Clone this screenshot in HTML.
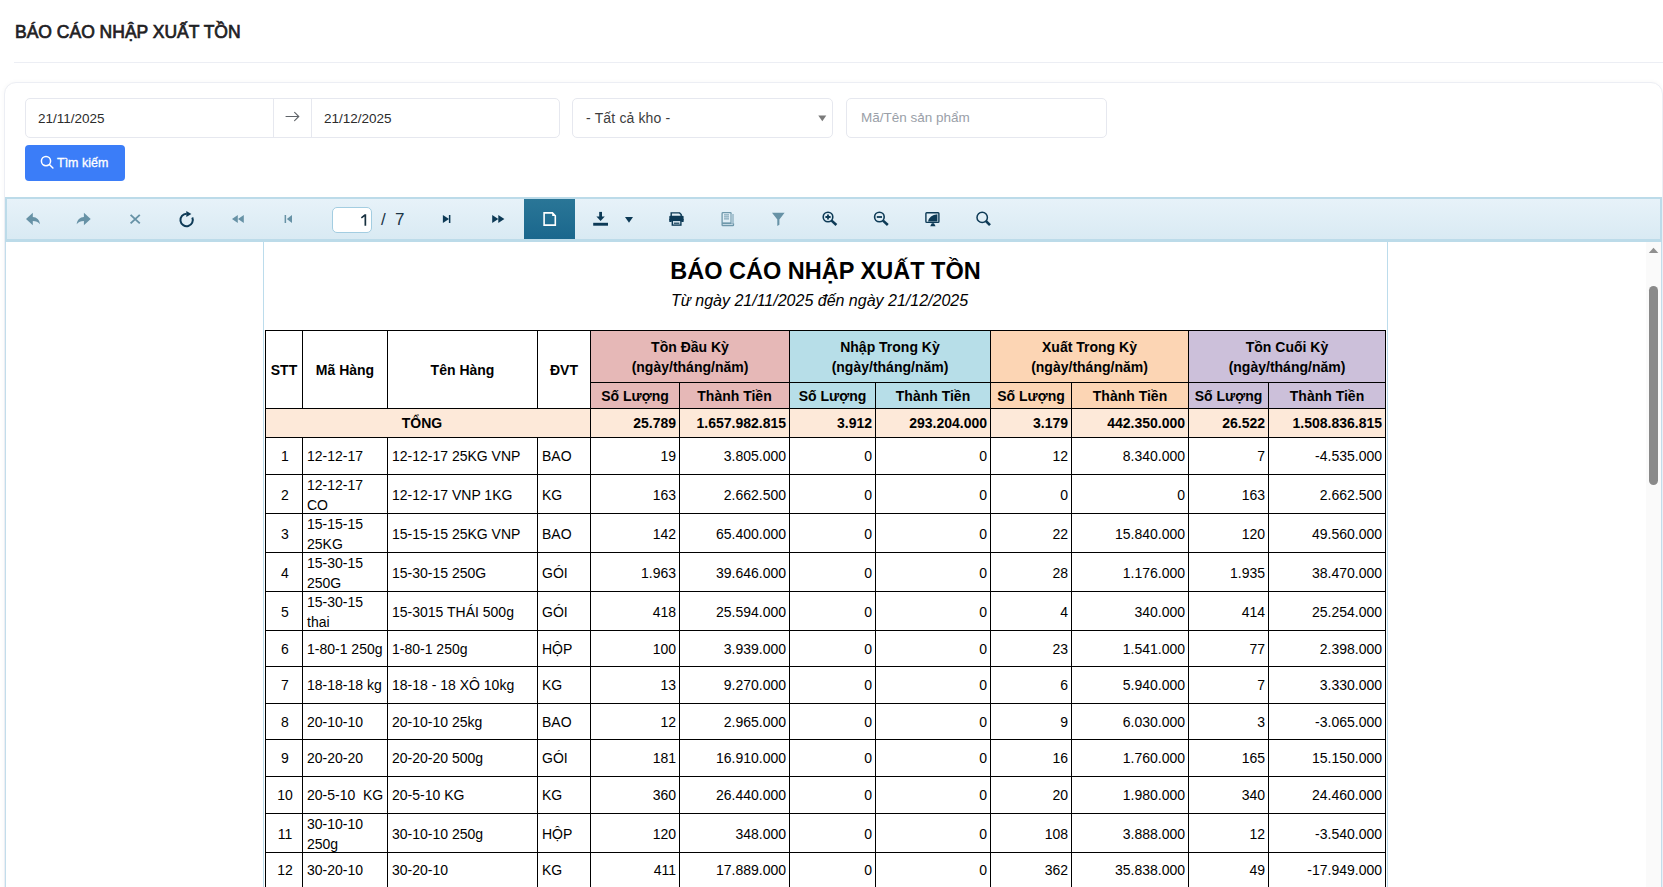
<!DOCTYPE html>
<html><head><meta charset="utf-8">
<style>
*{box-sizing:border-box;margin:0;padding:0}
html,body{width:1663px;height:887px;overflow:hidden;background:#fff;font-family:"Liberation Sans",sans-serif;color:#212529}
.abs{position:absolute}
#bgl{display:none}
#title{left:15px;top:22px;font-size:17.5px;font-weight:normal;-webkit-text-stroke:0.7px #1f2124;color:#1f2124;white-space:nowrap}
#hr{left:14px;top:62px;width:1649px;height:1px;background:#eceef4}
#card{left:4px;top:82px;width:1659px;height:900px;border:1px solid #eceef4;border-radius:11px;background:#fff;border-radius:12px;box-shadow:0 0 5px rgba(20,30,60,0.035)}
.inp{border:1px solid #e6e8ef;border-radius:5px;background:#fff;font-size:13.5px;color:#2b2b2b;white-space:nowrap}
#range{left:25px;top:98px;width:535px;height:40px}
#range .d1{left:12px;top:12px}
#range .sep1{left:247px;top:0;width:1px;height:38px;background:#e6e8ef}
#range .sep2{left:285px;top:0;width:1px;height:38px;background:#e6e8ef}
#range .d2{left:298px;top:12px}
#sel{left:572px;top:98px;width:261px;height:40px}
#sel .t{left:13px;top:11px;color:#3d3d3d;font-size:14px;word-spacing:0.5px}
#prod{left:846px;top:98px;width:261px;height:40px}
#prod .t{left:14px;top:11px;color:#9aa0a8}
#btn{left:25px;top:145px;width:100px;height:36px;background:#3b7df8;border-radius:4px;color:#fff;font-size:12.5px}
#btn .t{left:32px;top:10.5px;color:#fff;-webkit-text-stroke:0.3px #fff}
#tb{left:5px;top:197px;width:1657px;height:45px;border:2px solid #bcdbe9;border-bottom-width:3px;background:linear-gradient(#e7f2f9,#d9eaf3)}
#viewer{left:5px;top:242px;width:1657px;height:660px;border-left:1px solid #c2ddeb;border-right:1px solid #c2ddeb;background:#fff}
#page{left:263px;top:242px;width:1125px;height:700px;border-left:1px solid #bcdcec;border-right:1px solid #bcdcec;background:#fff}
#sb{left:1646px;top:242px;width:15px;height:645px;background:#fafafa}
#thumb{left:1649px;top:286px;width:9px;height:199px;background:#8a8a8a;border-radius:5px}
#pgin{left:332px;top:207px;width:40px;height:26px;background:#fff;border:1px solid #a3cde1;border-radius:5px}
#pgin .t{right:3px;top:4px;font-size:16px;color:#17303f}
#pgof{left:381px;top:210px;font-size:17px;color:#1b3445;white-space:nowrap;word-spacing:4.5px}
#act{left:524px;top:199px;width:51px;height:40px;background:linear-gradient(#2a7697,#1a678d)}
#icons{left:0;top:0;width:1663px;height:887px;pointer-events:none}

.c{position:absolute;border:1px solid #000;display:flex;align-items:center;font-size:14px;color:#000;line-height:20px;white-space:nowrap;overflow:hidden}
.c.c{justify-content:center;text-align:center}
.c.l{justify-content:flex-start;padding-left:4px;text-align:left}
.c.r{justify-content:flex-end;padding-right:3px}
.c.b{font-weight:bold}
.c.tong span{margin-left:-12px}
.c.stt span{margin-left:2px}
.c.pt{padding-top:2px}
.c.ml span{position:relative;top:0px}
#rtitle{left:263px;width:1125px;top:258px;text-align:center;font-size:23.5px;font-weight:bold;color:#000;white-space:nowrap}
#rsub{left:257px;width:1125px;top:292px;text-align:center;font-size:16px;font-style:italic;color:#000;white-space:nowrap}
</style></head><body>
<div id="bgl" class="abs"></div>
<div id="title" class="abs">BÁO CÁO NHẬP XUẤT TỒN</div>
<div id="hr" class="abs"></div>
<div id="card" class="abs"></div>
<div id="range" class="abs inp">
  <div class="abs d1">21/11/2025</div>
  <div class="abs sep1"></div>
  <div class="abs sep2"></div>
  <div class="abs d2">21/12/2025</div>
</div>
<div id="sel" class="abs inp"><div class="abs t">- Tất cả kho -</div></div>
<div id="prod" class="abs inp"><div class="abs t">Mã/Tên sản phẩm</div></div>
<div id="btn" class="abs"><div class="abs t">Tìm kiếm</div></div>
<div id="tb" class="abs"></div>
<div id="act" class="abs"></div>
<div id="pgin" class="abs"></div>
<div id="pgof" class="abs">/ 7</div>
<div id="viewer" class="abs"></div>
<div id="page" class="abs"></div>
<div id="rtitle" class="abs">BÁO CÁO NHẬP XUẤT TỒN</div>
<div id="rsub" class="abs">Từ ngày 21/11/2025 đến ngày 21/12/2025</div>
<div class="c c b" style="left:265px;top:330px;width:38px;height:79px;"><span>STT</span></div>
<div class="c c b" style="left:302px;top:330px;width:86px;height:79px;"><span>Mã Hàng</span></div>
<div class="c c b" style="left:387px;top:330px;width:151px;height:79px;"><span>Tên Hàng</span></div>
<div class="c c b" style="left:537px;top:330px;width:54px;height:79px;"><span>ĐVT</span></div>
<div class="c c b g" style="left:590px;top:330px;width:200px;height:53px;background:#e6b8b7;"><span>Tồn Đầu Kỳ<br>(ngày/tháng/năm)</span></div>
<div class="c c b" style="left:590px;top:382px;width:90px;height:27px;background:#e6b8b7;"><span>Số Lượng</span></div>
<div class="c c b" style="left:679px;top:382px;width:111px;height:27px;background:#e6b8b7;"><span>Thành Tiền</span></div>
<div class="c c b g" style="left:789px;top:330px;width:202px;height:53px;background:#b7dee8;"><span>Nhập Trong Kỳ<br>(ngày/tháng/năm)</span></div>
<div class="c c b" style="left:789px;top:382px;width:87px;height:27px;background:#b7dee8;"><span>Số Lượng</span></div>
<div class="c c b" style="left:875px;top:382px;width:116px;height:27px;background:#b7dee8;"><span>Thành Tiền</span></div>
<div class="c c b g" style="left:990px;top:330px;width:199px;height:53px;background:#fcd5b4;"><span>Xuất Trong Kỳ<br>(ngày/tháng/năm)</span></div>
<div class="c c b" style="left:990px;top:382px;width:82px;height:27px;background:#fcd5b4;"><span>Số Lượng</span></div>
<div class="c c b" style="left:1071px;top:382px;width:118px;height:27px;background:#fcd5b4;"><span>Thành Tiền</span></div>
<div class="c c b g" style="left:1188px;top:330px;width:198px;height:53px;background:#ccc0da;"><span>Tồn Cuối Kỳ<br>(ngày/tháng/năm)</span></div>
<div class="c c b" style="left:1188px;top:382px;width:81px;height:27px;background:#ccc0da;"><span>Số Lượng</span></div>
<div class="c c b" style="left:1268px;top:382px;width:118px;height:27px;background:#ccc0da;"><span>Thành Tiền</span></div>
<div class="c c b tong" style="left:265px;top:408px;width:326px;height:30px;background:#fde9d9;"><span>TỔNG</span></div>
<div class="c r b" style="left:590px;top:408px;width:90px;height:30px;background:#fde9d9;"><span>25.789</span></div>
<div class="c r b" style="left:679px;top:408px;width:111px;height:30px;background:#fde9d9;"><span>1.657.982.815</span></div>
<div class="c r b" style="left:789px;top:408px;width:87px;height:30px;background:#fde9d9;"><span>3.912</span></div>
<div class="c r b" style="left:875px;top:408px;width:116px;height:30px;background:#fde9d9;"><span>293.204.000</span></div>
<div class="c r b" style="left:990px;top:408px;width:82px;height:30px;background:#fde9d9;"><span>3.179</span></div>
<div class="c r b" style="left:1071px;top:408px;width:118px;height:30px;background:#fde9d9;"><span>442.350.000</span></div>
<div class="c r b" style="left:1188px;top:408px;width:81px;height:30px;background:#fde9d9;"><span>26.522</span></div>
<div class="c r b" style="left:1268px;top:408px;width:118px;height:30px;background:#fde9d9;"><span>1.508.836.815</span></div>
<div class="c c  stt" style="left:265px;top:437px;width:38px;height:38px;"><span>1</span></div>
<div class="c l " style="left:302px;top:437px;width:86px;height:38px;"><span>12-12-17</span></div>
<div class="c l " style="left:387px;top:437px;width:151px;height:38px;"><span>12-12-17 25KG VNP</span></div>
<div class="c l " style="left:537px;top:437px;width:54px;height:38px;"><span>BAO</span></div>
<div class="c r " style="left:590px;top:437px;width:90px;height:38px;"><span>19</span></div>
<div class="c r " style="left:679px;top:437px;width:111px;height:38px;"><span>3.805.000</span></div>
<div class="c r " style="left:789px;top:437px;width:87px;height:38px;"><span>0</span></div>
<div class="c r " style="left:875px;top:437px;width:116px;height:38px;"><span>0</span></div>
<div class="c r " style="left:990px;top:437px;width:82px;height:38px;"><span>12</span></div>
<div class="c r " style="left:1071px;top:437px;width:118px;height:38px;"><span>8.340.000</span></div>
<div class="c r " style="left:1188px;top:437px;width:81px;height:38px;"><span>7</span></div>
<div class="c r " style="left:1268px;top:437px;width:118px;height:38px;"><span>-4.535.000</span></div>
<div class="c c  stt pt" style="left:265px;top:474px;width:38px;height:40px;"><span>2</span></div>
<div class="c l ml pt" style="left:302px;top:474px;width:86px;height:40px;"><span>12-12-17<br>CO</span></div>
<div class="c l  pt" style="left:387px;top:474px;width:151px;height:40px;"><span>12-12-17 VNP 1KG</span></div>
<div class="c l  pt" style="left:537px;top:474px;width:54px;height:40px;"><span>KG</span></div>
<div class="c r  pt" style="left:590px;top:474px;width:90px;height:40px;"><span>163</span></div>
<div class="c r  pt" style="left:679px;top:474px;width:111px;height:40px;"><span>2.662.500</span></div>
<div class="c r  pt" style="left:789px;top:474px;width:87px;height:40px;"><span>0</span></div>
<div class="c r  pt" style="left:875px;top:474px;width:116px;height:40px;"><span>0</span></div>
<div class="c r  pt" style="left:990px;top:474px;width:82px;height:40px;"><span>0</span></div>
<div class="c r  pt" style="left:1071px;top:474px;width:118px;height:40px;"><span>0</span></div>
<div class="c r  pt" style="left:1188px;top:474px;width:81px;height:40px;"><span>163</span></div>
<div class="c r  pt" style="left:1268px;top:474px;width:118px;height:40px;"><span>2.662.500</span></div>
<div class="c c  stt pt" style="left:265px;top:513px;width:38px;height:40px;"><span>3</span></div>
<div class="c l ml pt" style="left:302px;top:513px;width:86px;height:40px;"><span>15-15-15<br>25KG</span></div>
<div class="c l  pt" style="left:387px;top:513px;width:151px;height:40px;"><span>15-15-15 25KG VNP</span></div>
<div class="c l  pt" style="left:537px;top:513px;width:54px;height:40px;"><span>BAO</span></div>
<div class="c r  pt" style="left:590px;top:513px;width:90px;height:40px;"><span>142</span></div>
<div class="c r  pt" style="left:679px;top:513px;width:111px;height:40px;"><span>65.400.000</span></div>
<div class="c r  pt" style="left:789px;top:513px;width:87px;height:40px;"><span>0</span></div>
<div class="c r  pt" style="left:875px;top:513px;width:116px;height:40px;"><span>0</span></div>
<div class="c r  pt" style="left:990px;top:513px;width:82px;height:40px;"><span>22</span></div>
<div class="c r  pt" style="left:1071px;top:513px;width:118px;height:40px;"><span>15.840.000</span></div>
<div class="c r  pt" style="left:1188px;top:513px;width:81px;height:40px;"><span>120</span></div>
<div class="c r  pt" style="left:1268px;top:513px;width:118px;height:40px;"><span>49.560.000</span></div>
<div class="c c  stt pt" style="left:265px;top:552px;width:38px;height:40px;"><span>4</span></div>
<div class="c l ml pt" style="left:302px;top:552px;width:86px;height:40px;"><span>15-30-15<br>250G</span></div>
<div class="c l  pt" style="left:387px;top:552px;width:151px;height:40px;"><span>15-30-15 250G</span></div>
<div class="c l  pt" style="left:537px;top:552px;width:54px;height:40px;"><span>GÓI</span></div>
<div class="c r  pt" style="left:590px;top:552px;width:90px;height:40px;"><span>1.963</span></div>
<div class="c r  pt" style="left:679px;top:552px;width:111px;height:40px;"><span>39.646.000</span></div>
<div class="c r  pt" style="left:789px;top:552px;width:87px;height:40px;"><span>0</span></div>
<div class="c r  pt" style="left:875px;top:552px;width:116px;height:40px;"><span>0</span></div>
<div class="c r  pt" style="left:990px;top:552px;width:82px;height:40px;"><span>28</span></div>
<div class="c r  pt" style="left:1071px;top:552px;width:118px;height:40px;"><span>1.176.000</span></div>
<div class="c r  pt" style="left:1188px;top:552px;width:81px;height:40px;"><span>1.935</span></div>
<div class="c r  pt" style="left:1268px;top:552px;width:118px;height:40px;"><span>38.470.000</span></div>
<div class="c c  stt pt" style="left:265px;top:591px;width:38px;height:40px;"><span>5</span></div>
<div class="c l ml pt" style="left:302px;top:591px;width:86px;height:40px;"><span>15-30-15<br>thai</span></div>
<div class="c l  pt" style="left:387px;top:591px;width:151px;height:40px;"><span>15-3015 THÁI 500g</span></div>
<div class="c l  pt" style="left:537px;top:591px;width:54px;height:40px;"><span>GÓI</span></div>
<div class="c r  pt" style="left:590px;top:591px;width:90px;height:40px;"><span>418</span></div>
<div class="c r  pt" style="left:679px;top:591px;width:111px;height:40px;"><span>25.594.000</span></div>
<div class="c r  pt" style="left:789px;top:591px;width:87px;height:40px;"><span>0</span></div>
<div class="c r  pt" style="left:875px;top:591px;width:116px;height:40px;"><span>0</span></div>
<div class="c r  pt" style="left:990px;top:591px;width:82px;height:40px;"><span>4</span></div>
<div class="c r  pt" style="left:1071px;top:591px;width:118px;height:40px;"><span>340.000</span></div>
<div class="c r  pt" style="left:1188px;top:591px;width:81px;height:40px;"><span>414</span></div>
<div class="c r  pt" style="left:1268px;top:591px;width:118px;height:40px;"><span>25.254.000</span></div>
<div class="c c  stt" style="left:265px;top:630px;width:38px;height:37px;"><span>6</span></div>
<div class="c l " style="left:302px;top:630px;width:86px;height:37px;"><span>1-80-1 250g</span></div>
<div class="c l " style="left:387px;top:630px;width:151px;height:37px;"><span>1-80-1 250g</span></div>
<div class="c l " style="left:537px;top:630px;width:54px;height:37px;"><span>HỘP</span></div>
<div class="c r " style="left:590px;top:630px;width:90px;height:37px;"><span>100</span></div>
<div class="c r " style="left:679px;top:630px;width:111px;height:37px;"><span>3.939.000</span></div>
<div class="c r " style="left:789px;top:630px;width:87px;height:37px;"><span>0</span></div>
<div class="c r " style="left:875px;top:630px;width:116px;height:37px;"><span>0</span></div>
<div class="c r " style="left:990px;top:630px;width:82px;height:37px;"><span>23</span></div>
<div class="c r " style="left:1071px;top:630px;width:118px;height:37px;"><span>1.541.000</span></div>
<div class="c r " style="left:1188px;top:630px;width:81px;height:37px;"><span>77</span></div>
<div class="c r " style="left:1268px;top:630px;width:118px;height:37px;"><span>2.398.000</span></div>
<div class="c c  stt" style="left:265px;top:666px;width:38px;height:38px;"><span>7</span></div>
<div class="c l " style="left:302px;top:666px;width:86px;height:38px;"><span>18-18-18 kg</span></div>
<div class="c l " style="left:387px;top:666px;width:151px;height:38px;"><span>18-18 - 18 XÔ 10kg</span></div>
<div class="c l " style="left:537px;top:666px;width:54px;height:38px;"><span>KG</span></div>
<div class="c r " style="left:590px;top:666px;width:90px;height:38px;"><span>13</span></div>
<div class="c r " style="left:679px;top:666px;width:111px;height:38px;"><span>9.270.000</span></div>
<div class="c r " style="left:789px;top:666px;width:87px;height:38px;"><span>0</span></div>
<div class="c r " style="left:875px;top:666px;width:116px;height:38px;"><span>0</span></div>
<div class="c r " style="left:990px;top:666px;width:82px;height:38px;"><span>6</span></div>
<div class="c r " style="left:1071px;top:666px;width:118px;height:38px;"><span>5.940.000</span></div>
<div class="c r " style="left:1188px;top:666px;width:81px;height:38px;"><span>7</span></div>
<div class="c r " style="left:1268px;top:666px;width:118px;height:38px;"><span>3.330.000</span></div>
<div class="c c  stt" style="left:265px;top:703px;width:38px;height:37px;"><span>8</span></div>
<div class="c l " style="left:302px;top:703px;width:86px;height:37px;"><span>20-10-10</span></div>
<div class="c l " style="left:387px;top:703px;width:151px;height:37px;"><span>20-10-10 25kg</span></div>
<div class="c l " style="left:537px;top:703px;width:54px;height:37px;"><span>BAO</span></div>
<div class="c r " style="left:590px;top:703px;width:90px;height:37px;"><span>12</span></div>
<div class="c r " style="left:679px;top:703px;width:111px;height:37px;"><span>2.965.000</span></div>
<div class="c r " style="left:789px;top:703px;width:87px;height:37px;"><span>0</span></div>
<div class="c r " style="left:875px;top:703px;width:116px;height:37px;"><span>0</span></div>
<div class="c r " style="left:990px;top:703px;width:82px;height:37px;"><span>9</span></div>
<div class="c r " style="left:1071px;top:703px;width:118px;height:37px;"><span>6.030.000</span></div>
<div class="c r " style="left:1188px;top:703px;width:81px;height:37px;"><span>3</span></div>
<div class="c r " style="left:1268px;top:703px;width:118px;height:37px;"><span>-3.065.000</span></div>
<div class="c c  stt" style="left:265px;top:739px;width:38px;height:38px;"><span>9</span></div>
<div class="c l " style="left:302px;top:739px;width:86px;height:38px;"><span>20-20-20</span></div>
<div class="c l " style="left:387px;top:739px;width:151px;height:38px;"><span>20-20-20 500g</span></div>
<div class="c l " style="left:537px;top:739px;width:54px;height:38px;"><span>GÓI</span></div>
<div class="c r " style="left:590px;top:739px;width:90px;height:38px;"><span>181</span></div>
<div class="c r " style="left:679px;top:739px;width:111px;height:38px;"><span>16.910.000</span></div>
<div class="c r " style="left:789px;top:739px;width:87px;height:38px;"><span>0</span></div>
<div class="c r " style="left:875px;top:739px;width:116px;height:38px;"><span>0</span></div>
<div class="c r " style="left:990px;top:739px;width:82px;height:38px;"><span>16</span></div>
<div class="c r " style="left:1071px;top:739px;width:118px;height:38px;"><span>1.760.000</span></div>
<div class="c r " style="left:1188px;top:739px;width:81px;height:38px;"><span>165</span></div>
<div class="c r " style="left:1268px;top:739px;width:118px;height:38px;"><span>15.150.000</span></div>
<div class="c c  stt" style="left:265px;top:776px;width:38px;height:38px;"><span>10</span></div>
<div class="c l " style="left:302px;top:776px;width:86px;height:38px;"><span>20-5-10&nbsp; KG</span></div>
<div class="c l " style="left:387px;top:776px;width:151px;height:38px;"><span>20-5-10 KG</span></div>
<div class="c l " style="left:537px;top:776px;width:54px;height:38px;"><span>KG</span></div>
<div class="c r " style="left:590px;top:776px;width:90px;height:38px;"><span>360</span></div>
<div class="c r " style="left:679px;top:776px;width:111px;height:38px;"><span>26.440.000</span></div>
<div class="c r " style="left:789px;top:776px;width:87px;height:38px;"><span>0</span></div>
<div class="c r " style="left:875px;top:776px;width:116px;height:38px;"><span>0</span></div>
<div class="c r " style="left:990px;top:776px;width:82px;height:38px;"><span>20</span></div>
<div class="c r " style="left:1071px;top:776px;width:118px;height:38px;"><span>1.980.000</span></div>
<div class="c r " style="left:1188px;top:776px;width:81px;height:38px;"><span>340</span></div>
<div class="c r " style="left:1268px;top:776px;width:118px;height:38px;"><span>24.460.000</span></div>
<div class="c c  stt pt" style="left:265px;top:813px;width:38px;height:40px;"><span>11</span></div>
<div class="c l ml pt" style="left:302px;top:813px;width:86px;height:40px;"><span>30-10-10<br>250g</span></div>
<div class="c l  pt" style="left:387px;top:813px;width:151px;height:40px;"><span>30-10-10 250g</span></div>
<div class="c l  pt" style="left:537px;top:813px;width:54px;height:40px;"><span>HỘP</span></div>
<div class="c r  pt" style="left:590px;top:813px;width:90px;height:40px;"><span>120</span></div>
<div class="c r  pt" style="left:679px;top:813px;width:111px;height:40px;"><span>348.000</span></div>
<div class="c r  pt" style="left:789px;top:813px;width:87px;height:40px;"><span>0</span></div>
<div class="c r  pt" style="left:875px;top:813px;width:116px;height:40px;"><span>0</span></div>
<div class="c r  pt" style="left:990px;top:813px;width:82px;height:40px;"><span>108</span></div>
<div class="c r  pt" style="left:1071px;top:813px;width:118px;height:40px;"><span>3.888.000</span></div>
<div class="c r  pt" style="left:1188px;top:813px;width:81px;height:40px;"><span>12</span></div>
<div class="c r  pt" style="left:1268px;top:813px;width:118px;height:40px;"><span>-3.540.000</span></div>
<div class="c c  stt" style="left:265px;top:852px;width:38px;height:36px;"><span>12</span></div>
<div class="c l " style="left:302px;top:852px;width:86px;height:36px;"><span>30-20-10</span></div>
<div class="c l " style="left:387px;top:852px;width:151px;height:36px;"><span>30-20-10</span></div>
<div class="c l " style="left:537px;top:852px;width:54px;height:36px;"><span>KG</span></div>
<div class="c r " style="left:590px;top:852px;width:90px;height:36px;"><span>411</span></div>
<div class="c r " style="left:679px;top:852px;width:111px;height:36px;"><span>17.889.000</span></div>
<div class="c r " style="left:789px;top:852px;width:87px;height:36px;"><span>0</span></div>
<div class="c r " style="left:875px;top:852px;width:116px;height:36px;"><span>0</span></div>
<div class="c r " style="left:990px;top:852px;width:82px;height:36px;"><span>362</span></div>
<div class="c r " style="left:1071px;top:852px;width:118px;height:36px;"><span>35.838.000</span></div>
<div class="c r " style="left:1188px;top:852px;width:81px;height:36px;"><span>49</span></div>
<div class="c r " style="left:1268px;top:852px;width:118px;height:36px;"><span>-17.949.000</span></div>
<div id="sb" class="abs"></div>
<div id="thumb" class="abs"></div>
<svg id="icons" class="abs" width="1663" height="887" viewBox="0 0 1663 887">
 <!-- date range arrow -->
 <g stroke="#5f6368" stroke-width="1.1" fill="none" stroke-linecap="round">
  <path d="M286,116.5 H298.8 M294.6,112.3 L298.8,116.5 L294.6,120.7"/>
 </g>
 <!-- select caret -->
 <path d="M818.3,115.5 H826.3 L822.3,121.2 Z" fill="#7a7a7a"/>
 <!-- button search icon -->
 <g stroke="#fff" stroke-width="1.5" fill="none" stroke-linecap="round">
  <circle cx="46" cy="161.1" r="4.6"/>
  <path d="M49.4,164.5 L52.9,168"/>
 </g>
 <!-- toolbar disabled icons -->
 <g fill="#6792a6">
  <path d="M26,219 L32.8,212.8 L32.8,216.9 C36.6,217.1 39.6,219.6 40,224.2 C38.2,222.1 36,221.1 32.8,221.1 L32.8,225.2 Z"/>
  <path transform="translate(116.7,0) scale(-1,1)" d="M26,219 L32.8,212.8 L32.8,216.9 C36.6,217.1 39.6,219.6 40,224.2 C38.2,222.1 36,221.1 32.8,221.1 L32.8,225.2 Z"/>
  <path d="M232,219 L237.8,215 L237.8,223 Z M238,219 L243.8,215 L243.8,223 Z"/>
  <rect x="284.6" y="215" width="1.5" height="8"/>
  <path d="M286.8,219 L292,215 L292,223 Z"/>
  <path d="M772,212.8 L784.6,212.8 L779.4,219.5 L779.4,224.8 L777.3,226 L777.3,219.5 Z"/>
 </g>
 <g stroke="#6792a6" stroke-width="1.9" fill="none">
  <path d="M130.6,214.9 L139.8,223.4 M139.8,214.9 L130.6,223.4"/>
 </g>
 <!-- doc gray -->
 <g fill="none" stroke="#6f98ab" stroke-width="1.3">
  <rect x="722.1" y="212.7" width="9" height="10.6" rx="0.8"/>
  <rect x="722.1" y="223.2" width="11.4" height="2.3" rx="0.6"/>
  <path stroke-width="1" d="M724,214.9 H729 M724,216.9 H729 M724,218.9 H729"/>
 </g>
 <rect x="731.2" y="214" width="2.8" height="9.5" fill="#a8c4d2"/>
 <!-- dark icons -->
 <g fill="#0d3a56">
  <path d="M186.3,210.9 L191.4,213.9 L186.3,216.9 Z"/>
  <path d="M442.9,215 L449,219 L442.9,223 Z"/>
  <rect x="448.9" y="215" width="1.5" height="8"/>
  <path d="M492.2,215 L498.3,219 L492.2,223 Z M498.3,215 L504.4,219 L498.3,223 Z"/>
  <rect x="599.2" y="211.9" width="2.8" height="5.5"/>
  <path d="M596.4,216.5 L604.8,216.5 L600.6,221.1 Z"/>
  <rect x="593.2" y="222.8" width="14.8" height="2.9"/>
  <path d="M625,216.9 L633,216.9 L629,222.7 Z"/>
  <rect x="669.3" y="215.8" width="14.3" height="4.9" rx="1"/>
  <rect x="669.3" y="219" width="2.4" height="3"/>
  <rect x="681.2" y="219" width="2.4" height="3"/>
  <path d="M928,221.6 Q929.3,215 937.4,214.2 L937.4,221.6 Z"/>
  <path d="M930.2,226.2 L931.8,223.2 L934,223.2 L935.6,226.2 Z"/>
 </g>
 <g fill="none" stroke="#0d3a56">
  <path stroke-width="2" d="M186.6,213.8 A6.2,6.2 0 1 0 192.3,217.5"/>
  <path stroke-width="1.4" d="M671.2,216 V212.9 H679.6 L681.2,214.5 V216"/>
  <rect stroke-width="1.4" x="672.3" y="220.4" width="8.6" height="4.7"/>
  <path stroke-width="1.2" d="M673.8,223.2 H679.4"/>
  <rect stroke-width="1.4" x="925.9" y="212.8" width="13" height="9.6" rx="0.8"/>
  <circle stroke-width="1.6" cx="828" cy="217" r="4.8"/>
  <path stroke-width="1.8" d="M825.4,217 H830.6 M828,214.4 V219.6"/>
  <path stroke-width="2.6" d="M831.6,220.6 L836.4,225"/>
  <circle stroke-width="1.6" cx="879.4" cy="217" r="4.8"/>
  <path stroke-width="1.8" d="M876.8,217 H882"/>
  <path stroke-width="2.6" d="M883,220.6 L887.8,225"/>
  <circle stroke-width="1.5" cx="982.2" cy="217.4" r="5.2"/>
  <path stroke-width="2.6" d="M986,221.2 L990,225.2"/>
 </g>
 <!-- active doc icon -->
 <path d="M544.1,212.9 L552.4,212.9 L555.3,215.8 L555.3,225.1 L544.1,225.1 Z" fill="none" stroke="#fff" stroke-width="1.6"/>
 <path d="M552.2,212.4 L555.8,216 L552.2,216 Z" fill="#fff"/>
 <!-- page number 1 -->
 <path d="M360.9,217.2 L364.6,214.2 L366.2,214.2 L366.2,225.8 L364.5,225.8 L364.5,216.4 L361.8,218.6 Z" fill="#17303f"/>
 <!-- scrollbar arrow -->
 <path d="M1648.8,252.9 L1653.5,247.8 L1658.3,252.9 Z" fill="#8f8f8f"/>
</svg>
</body></html>
